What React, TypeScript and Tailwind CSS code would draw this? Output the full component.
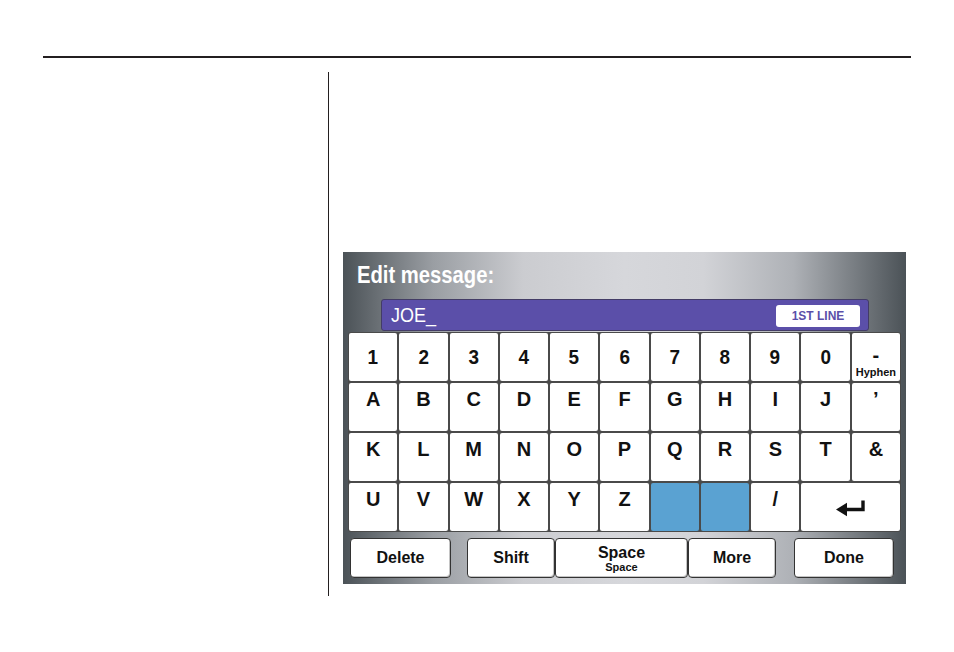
import React from "react";

type Key =
  | { kind: "digit"; label: string }
  | { kind: "char"; label: string }
  | { kind: "hyphen" }
  | { kind: "blank" }
  | { kind: "enter" };

const digits: Key[] = ["1", "2", "3", "4", "5", "6", "7", "8", "9", "0"].map(
  (d) => ({ kind: "digit", label: d })
);

const chars = (s: string[]): Key[] => s.map((c) => ({ kind: "char", label: c }));

const keys: Key[] = [
  ...digits,
  { kind: "hyphen" },
  ...chars(["A", "B", "C", "D", "E", "F", "G", "H", "I", "J", "\u2019"]),
  ...chars(["K", "L", "M", "N", "O", "P", "Q", "R", "S", "T", "&"]),
  ...chars(["U", "V", "W", "X", "Y", "Z"]),
  { kind: "blank" },
  { kind: "blank" },
  { kind: "char", label: "/" },
  { kind: "enter" },
];

function EnterArrow() {
  return (
    <svg width="30" height="17" viewBox="0 0 30 17" fill="none">
      <path d="M27 0.5V9.5H9" stroke="#111" strokeWidth="3.4" />
      <polygon points="0,9.5 11,2.8 11,16.2" fill="#111" />
    </svg>
  );
}

function KeyCell({ k }: { k: Key }) {
  if (k.kind === "blank") {
    return <div className="bg-[#5aa2d2] rounded-[2px]" />;
  }
  if (k.kind === "enter") {
    return (
      <div className="col-span-2 bg-white rounded-[2px] flex items-center justify-center pt-[2px]">
        <EnterArrow />
      </div>
    );
  }
  if (k.kind === "hyphen") {
    return (
      <div className="bg-white rounded-[2px] flex flex-col items-center pt-[11px] text-[#111] font-bold">
        <span className="text-[20px] leading-[22px]">-</span>
        <span className="text-[11px] leading-[12px]">Hyphen</span>
      </div>
    );
  }
  if (k.kind === "digit") {
    return (
      <div className="bg-white rounded-[2px] flex items-center justify-center text-[21px] leading-[24px] font-bold text-[#111]">
        <span className="scale-x-90">{k.label}</span>
      </div>
    );
  }
  return (
    <div className="bg-white rounded-[2px] flex justify-center pt-[4px] text-[20px] leading-[24px] font-bold text-[#111]">
      <span className="scale-y-105">{k.label}</span>
    </div>
  );
}

function Btn({
  w,
  ml,
  children,
}: {
  w: string;
  ml?: string;
  children: React.ReactNode;
}) {
  return (
    <div
      className={`${w} ${ml ?? ""} h-[40px] bg-white border-[1.5px] border-[#333] rounded-[4px] shadow-[inset_-1px_-1px_0_#c4c4c4] flex flex-col items-center justify-center font-bold text-[#111]`}
    >
      {children}
    </div>
  );
}

export default function App() {
  return (
    <div className="relative w-[954px] h-[652px] bg-white overflow-hidden pt-[56px] font-['Liberation_Sans',Arial,sans-serif]">
      <div className="ml-[43px] w-[868px] h-[2px] bg-[#231f20]" />

      <div className="flex pt-[14px]">
        <div className="w-[328px] shrink-0" />
        <div className="w-[1px] h-[524px] bg-[#231f20] shrink-0" />

        <div className="mt-[180px] ml-[14px] w-[563px] h-[332px] shrink-0 flex flex-col bg-[linear-gradient(90deg,#4b5257_0%,#9a9ea3_16%,#cbccd0_32%,#d6d7db_50%,#d2d3d7_64%,#aeb1b6_80%,#4b5257_100%)]">
          <div className="pt-[11px] pl-[14px] h-[36px] text-[23px] leading-[25px] font-bold text-white">
            <span className="inline-block origin-left scale-x-[0.88]">Edit message:</span>
          </div>

          <div className="mt-[11px] ml-[38px] w-[488px] h-[32px] bg-[#5b4fa9] border border-[#433c66] rounded-[3px] flex items-center justify-between pl-[9px] pr-[8px]">
            <span className="text-[18px] leading-[20px] text-white scale-y-110 origin-left">JOE_</span>
            <span className="w-[84px] h-[22px] mt-[2px] bg-white rounded-[3px] flex items-center justify-center text-[12px] font-bold text-[#5b4fa9]">
              1ST LINE
            </span>
          </div>

          <div className="mt-[1px] ml-[5px] w-[553px] h-[200px] grid grid-cols-11 grid-rows-4 gap-[2px] p-[1px] bg-[#4a4a4a] rounded-[3px]">
            {keys.map((k, i) => (
              <KeyCell key={i} k={k} />
            ))}
          </div>

          <div className="mt-[6px] flex items-start">
            <Btn w="w-[101px]" ml="ml-[7px]">
              <span className="text-[16px] leading-[18px]">Delete</span>
            </Btn>
            <Btn w="w-[88px]" ml="ml-[16px]">
              <span className="text-[16px] leading-[18px]">Shift</span>
            </Btn>
            <Btn w="w-[133px]">
              <span className="text-[16px] leading-[17px]">Space</span>
              <span className="text-[11px] leading-[12px]">Space</span>
            </Btn>
            <Btn w="w-[88px]">
              <span className="text-[16px] leading-[18px]">More</span>
            </Btn>
            <Btn w="w-[100px]" ml="ml-[18px]">
              <span className="text-[16px] leading-[18px]">Done</span>
            </Btn>
          </div>
        </div>
      </div>
    </div>
  );
}
